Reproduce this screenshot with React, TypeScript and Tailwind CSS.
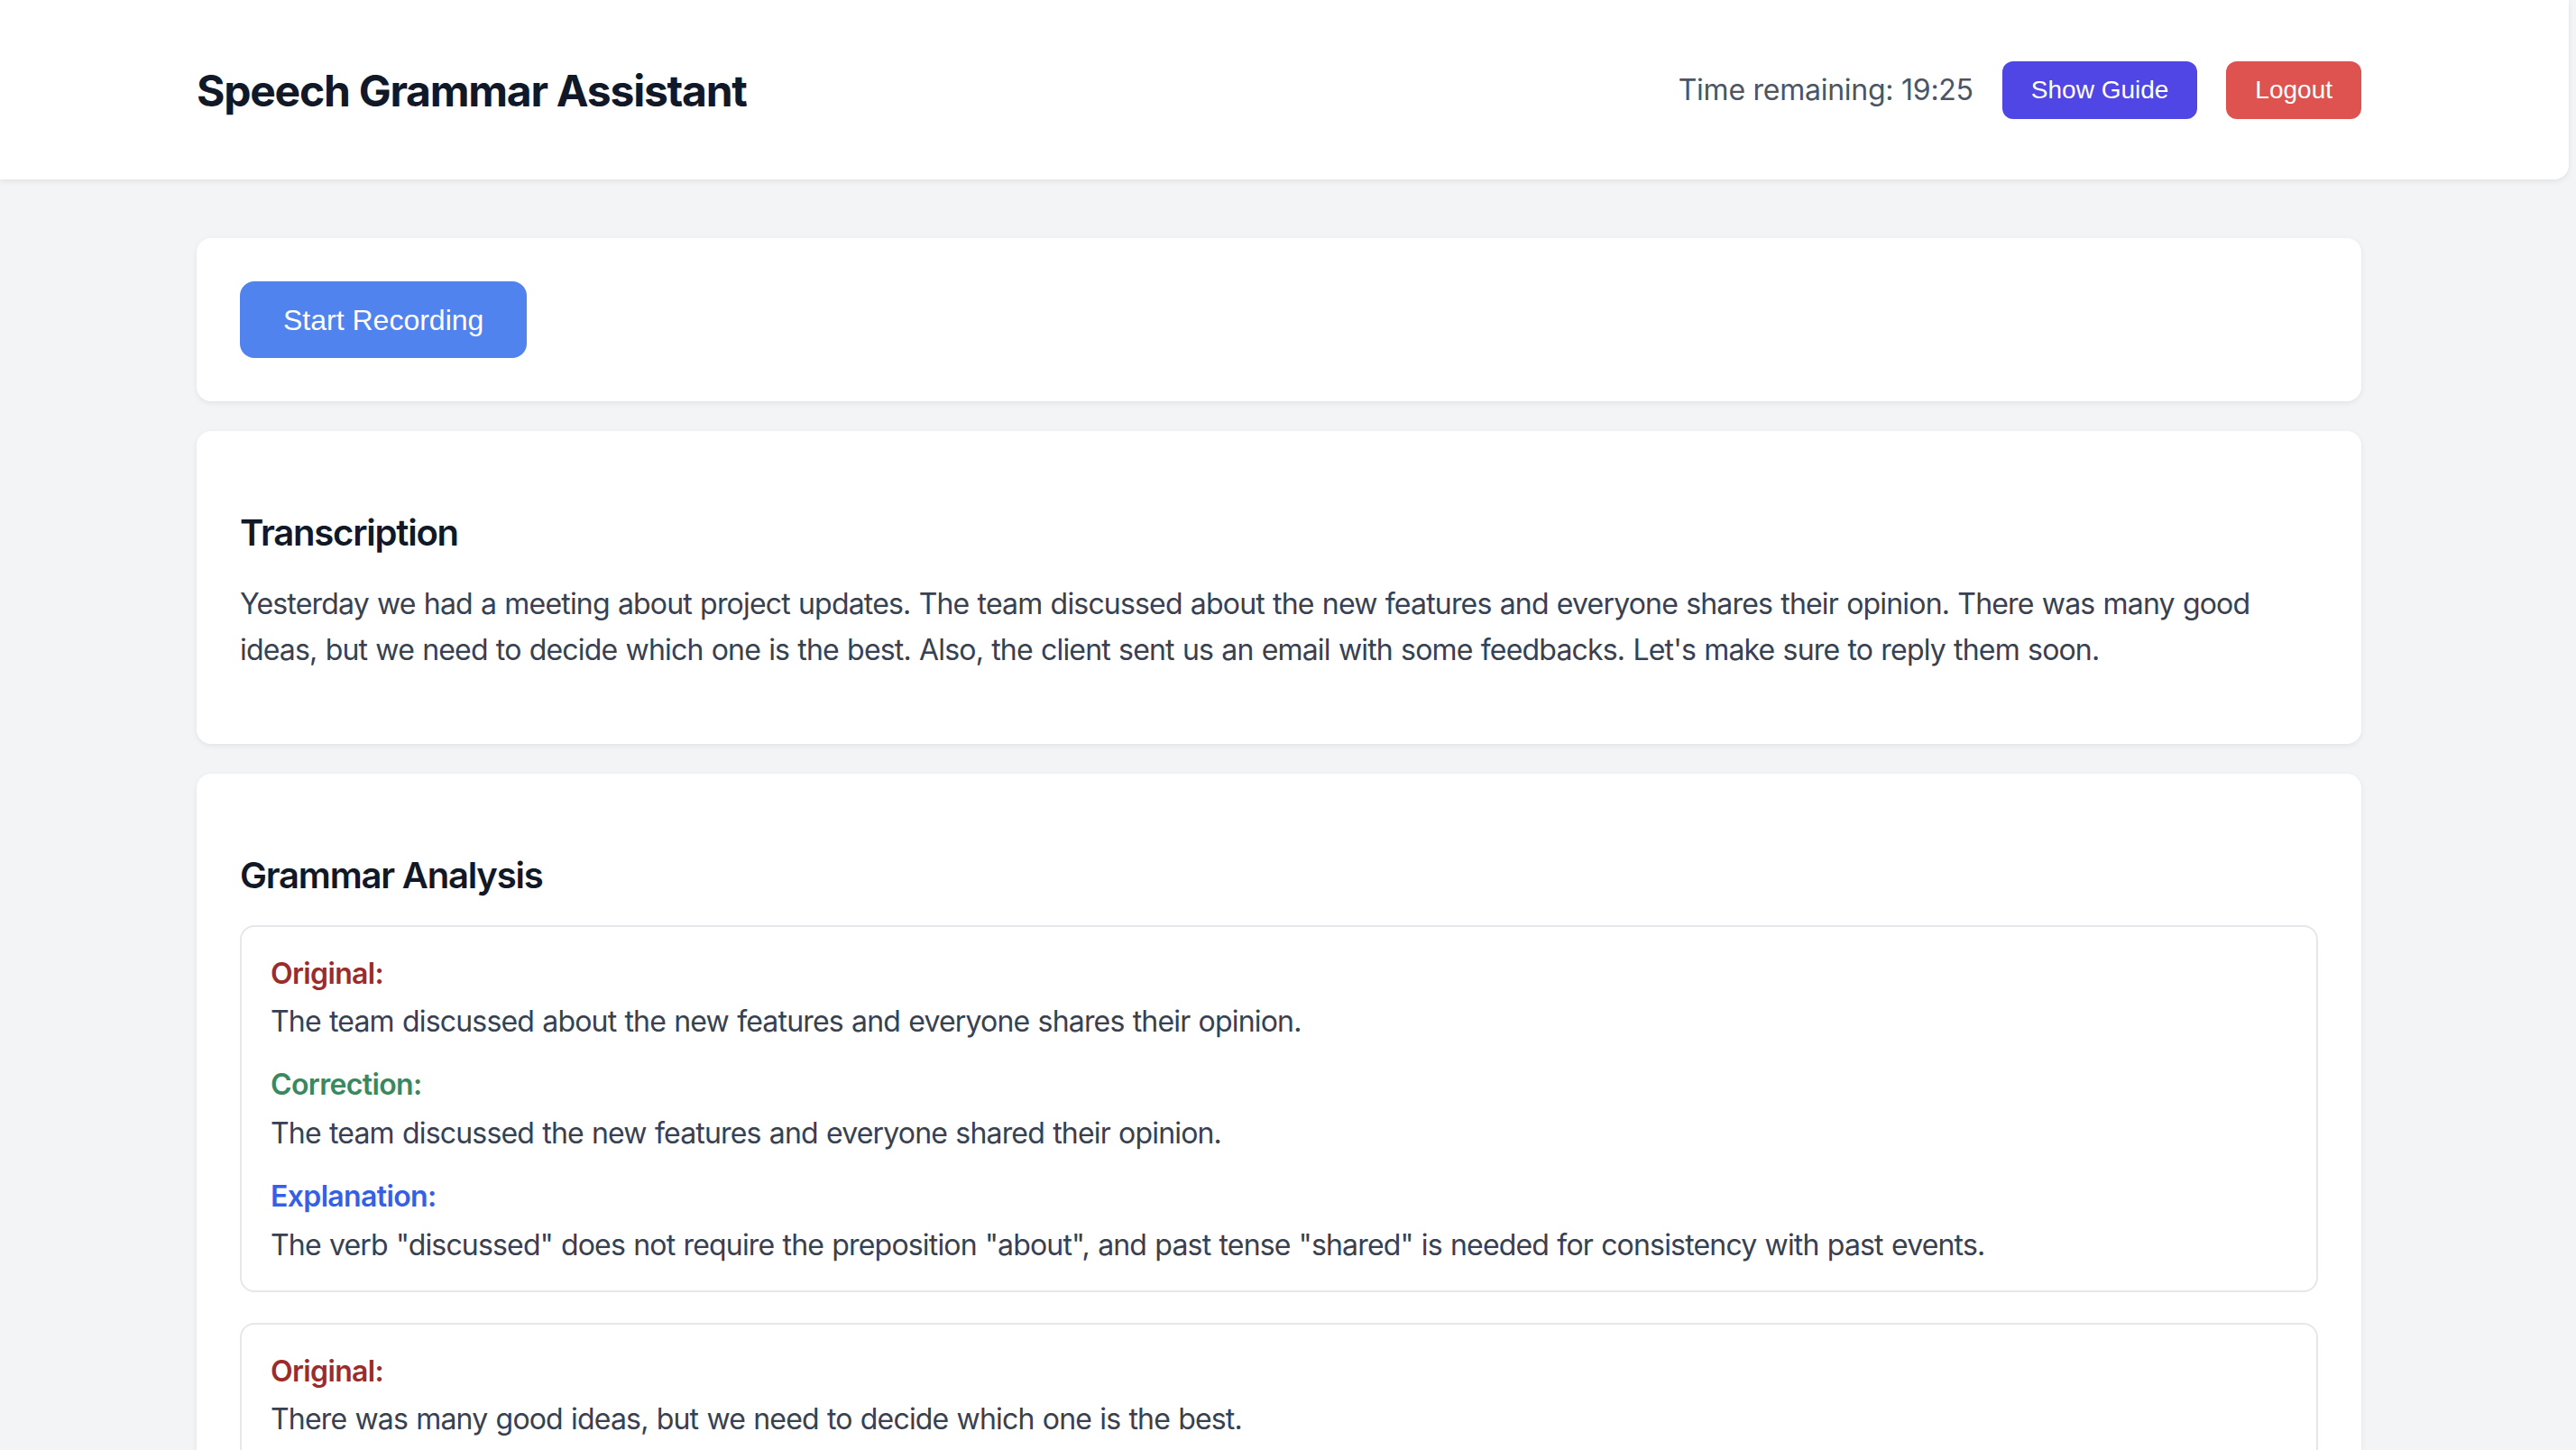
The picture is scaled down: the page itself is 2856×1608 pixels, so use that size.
import React from 'react'

interface Correction {
  original: string
  correction: string
  explanation: string
}

const transcription =
  "Yesterday we had a meeting about project updates. The team discussed about the new features and everyone shares their opinion. There was many good ideas, but we need to decide which one is the best. Also, the client sent us an email with some feedbacks. Let's make sure to reply them soon."

const corrections: Correction[] = [
  {
    original: 'The team discussed about the new features and everyone shares their opinion.',
    correction: 'The team discussed the new features and everyone shared their opinion.',
    explanation:
      'The verb "discussed" does not require the preposition "about", and past tense "shared" is needed for consistency with past events.',
  },
  {
    original: 'There was many good ideas, but we need to decide which one is the best.',
    correction: 'There were many good ideas, but we need to decide which one is the best.',
    explanation: 'The plural noun "ideas" needs the plural verb "were" instead of "was".',
  },
  {
    original: 'Also, the client sent us an email with some feedbacks.',
    correction: 'Also, the client sent us an email with some feedback.',
    explanation: '"Feedback" is an uncountable noun and has no plural form.',
  },
]

const inter = "font-['Inter','Noto_Sans',sans-serif]"
const arial = "font-['Liberation_Sans',Arial,sans-serif]"

export default function App() {
  return (
    <div className={`min-h-screen bg-[#f3f4f6] ${inter}`}>
      {/* Header */}
      <header className="w-[2848px] h-[199px] bg-white rounded-br-[16px] shadow-[0_2px_6px_rgba(0,0,0,0.08)]">
        <div className="ml-[218px] w-[2400px] h-full flex items-center justify-between">
          <h1 className="text-[48px] leading-[56px] font-bold tracking-[-0.026em] text-[#111827] mt-[2px]">
            Speech Grammar Assistant
          </h1>
          <div className="flex items-center gap-8">
            <span className="text-[32px] leading-[40px] tracking-[-0.008em] text-[#4b5563]">Time remaining: 19:25</span>
            <button className={`${arial} h-[64px] px-8 rounded-[12px] bg-[#4f46e5] text-white text-[28px]`}>
              Show Guide
            </button>
            <button className={`${arial} h-[64px] px-8 rounded-[12px] bg-[#de5350] text-white text-[28px]`}>
              Logout
            </button>
          </div>
        </div>
      </header>

      <main className="ml-[218px] w-[2400px] pt-[65px] pb-16 flex flex-col gap-[33px]">
        {/* Recording */}
        <section className="bg-white rounded-[16px] shadow-[0_2px_6px_rgba(0,0,0,0.07)] p-12">
          <button className={`${arial} h-[85px] px-12 rounded-[16px] bg-[#5083ed] text-white text-[32px]`}>
            Start Recording
          </button>
        </section>

        {/* Transcription */}
        <section className="bg-white rounded-[16px] shadow-[0_2px_6px_rgba(0,0,0,0.07)] px-12 pt-[85px] pb-[79px]">
          <h2 className="text-[40px] leading-[56px] font-semibold tracking-[-0.03em] text-[#111827] mb-[25px]">
            Transcription
          </h2>
          <p className="mr-[24px] text-[32px] leading-[51px] tracking-[-0.82px] [word-spacing:1px] text-[#374151]">
            {transcription}
          </p>
        </section>

        {/* Grammar analysis */}
        <section className="bg-white rounded-[16px] shadow-[0_2px_6px_rgba(0,0,0,0.07)] px-12 pt-[85px] pb-12">
          <h2 className="text-[40px] leading-[56px] font-semibold tracking-[-0.03em] text-[#111827] mb-[27px]">
            Grammar Analysis
          </h2>
          <div className="flex flex-col gap-[34px]">
            {corrections.map((c, i) => (
              <div key={i} className="border-2 border-[#e5e7eb] rounded-[16px] px-8 pt-8 pb-[30px]">
                <div className="text-[32px] leading-[40px] font-semibold tracking-[-0.02em] text-[#9b2c2c]">Original:</div>
                <p className="mt-[13px] text-[32px] leading-[40px] tracking-[-0.82px] [word-spacing:1px] text-[#374151]">
                  {c.original}
                </p>
                <div className="mt-[30px] text-[32px] leading-[40px] font-semibold tracking-[-0.02em] text-[#38895f]">
                  Correction:
                </div>
                <p className="mt-[14px] text-[32px] leading-[40px] tracking-[-0.82px] [word-spacing:1px] text-[#374151]">
                  {c.correction}
                </p>
                <div className="mt-[30px] text-[32px] leading-[40px] font-semibold tracking-[-0.02em] text-[#3360e6]">
                  Explanation:
                </div>
                <p className="mt-[14px] text-[32px] leading-[40px] tracking-[-0.82px] [word-spacing:1px] text-[#374151]">
                  {c.explanation}
                </p>
              </div>
            ))}
          </div>
        </section>
      </main>
    </div>
  )
}
